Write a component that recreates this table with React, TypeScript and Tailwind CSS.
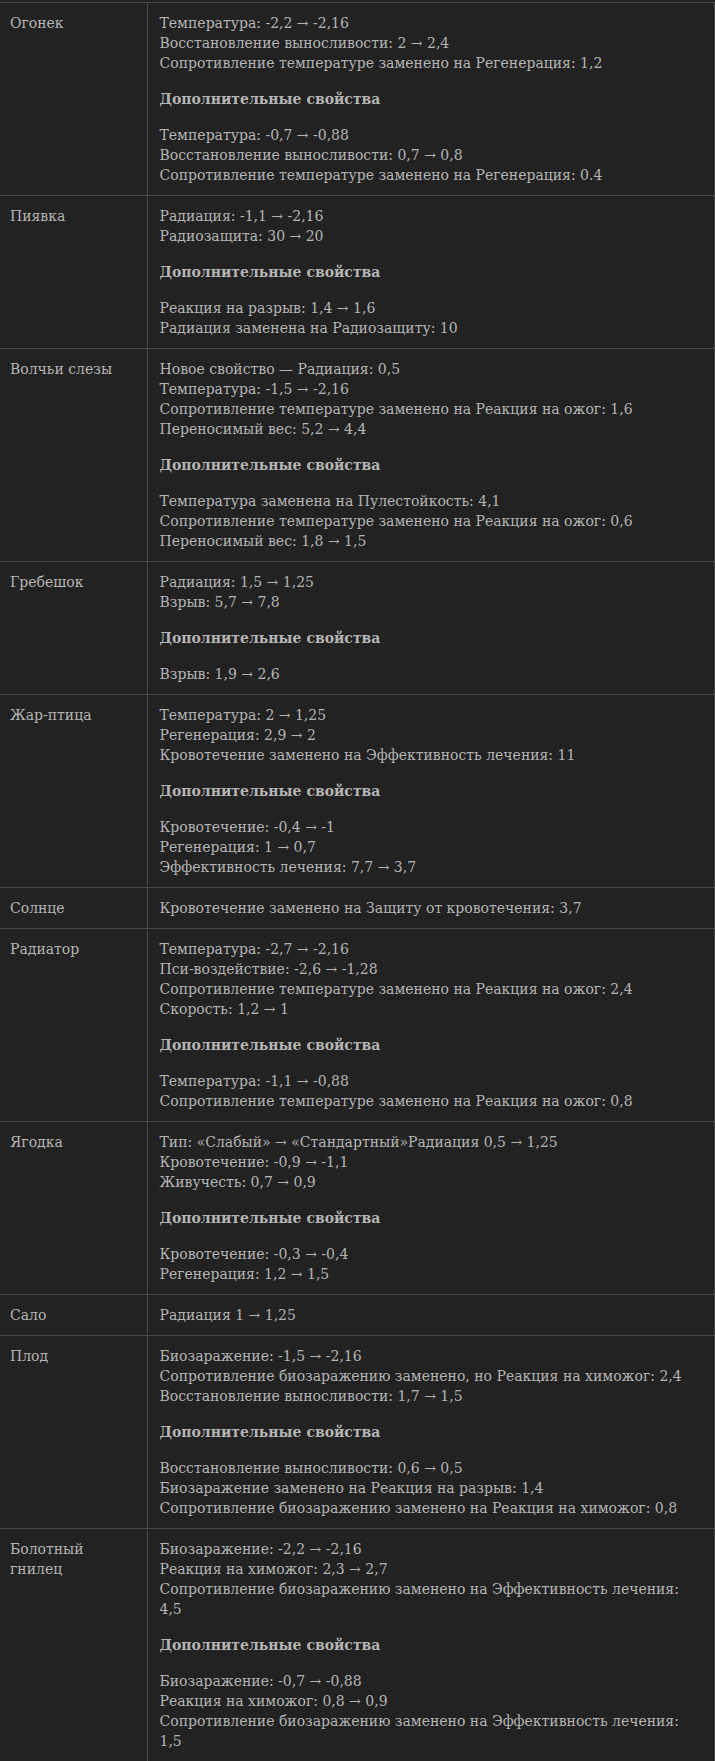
import React from "react";

type Row = {
  name: string;
  main: string[];
  extra?: string[];
};

const rows: Row[] = [
  {
    name: "Огонек",
    main: [
      "Температура: -2,2 → -2,16",
      "Восстановление выносливости: 2 → 2,4",
      "Сопротивление температуре заменено на Регенерация: 1,2",
    ],
    extra: [
      "Температура: -0,7 → -0,88",
      "Восстановление выносливости: 0,7 → 0,8",
      "Сопротивление температуре заменено на Регенерация: 0.4",
    ],
  },
  {
    name: "Пиявка",
    main: ["Радиация: -1,1 → -2,16", "Радиозащита: 30 → 20"],
    extra: ["Реакция на разрыв: 1,4 → 1,6", "Радиация заменена на Радиозащиту: 10"],
  },
  {
    name: "Волчьи слезы",
    main: [
      "Новое свойство — Радиация: 0,5",
      "Температура: -1,5 → -2,16",
      "Сопротивление температуре заменено на Реакция на ожог: 1,6",
      "Переносимый вес: 5,2 → 4,4",
    ],
    extra: [
      "Температура заменена на Пулестойкость: 4,1",
      "Сопротивление температуре заменено на Реакция на ожог: 0,6",
      "Переносимый вес: 1,8 → 1,5",
    ],
  },
  {
    name: "Гребешок",
    main: ["Радиация: 1,5 → 1,25", "Взрыв: 5,7 → 7,8"],
    extra: ["Взрыв: 1,9 → 2,6"],
  },
  {
    name: "Жар-птица",
    main: [
      "Температура: 2 → 1,25",
      "Регенерация: 2,9 → 2",
      "Кровотечение заменено на Эффективность лечения: 11",
    ],
    extra: [
      "Кровотечение: -0,4 → -1",
      "Регенерация: 1 → 0,7",
      "Эффективность лечения: 7,7 → 3,7",
    ],
  },
  {
    name: "Солнце",
    main: ["Кровотечение заменено на Защиту от кровотечения: 3,7"],
  },
  {
    name: "Радиатор",
    main: [
      "Температура: -2,7 → -2,16",
      "Пси-воздействие: -2,6 → -1,28",
      "Сопротивление температуре заменено на Реакция на ожог: 2,4",
      "Скорость: 1,2 → 1",
    ],
    extra: [
      "Температура: -1,1 → -0,88",
      "Сопротивление температуре заменено на Реакция на ожог: 0,8",
    ],
  },
  {
    name: "Ягодка",
    main: [
      "Тип: «Слабый» → «Стандартный»Радиация 0,5 → 1,25",
      "Кровотечение: -0,9 → -1,1",
      "Живучесть: 0,7 → 0,9",
    ],
    extra: ["Кровотечение: -0,3 → -0,4", "Регенерация: 1,2 → 1,5"],
  },
  {
    name: "Сало",
    main: ["Радиация 1 → 1,25"],
  },
  {
    name: "Плод",
    main: [
      "Биозаражение: -1,5 → -2,16",
      "Сопротивление биозаражению заменено, но Реакция на химожог: 2,4",
      "Восстановление выносливости: 1,7 → 1,5",
    ],
    extra: [
      "Восстановление выносливости: 0,6 → 0,5",
      "Биозаражение заменено на Реакция на разрыв: 1,4",
      "Сопротивление биозаражению заменено на Реакция на химожог: 0,8",
    ],
  },
  {
    name: "Болотный гнилец",
    main: [
      "Биозаражение: -2,2 → -2,16",
      "Реакция на химожог: 2,3 → 2,7",
      "Сопротивление биозаражению заменено на Эффективность лечения: 4,5",
    ],
    extra: [
      "Биозаражение: -0,7 → -0,88",
      "Реакция на химожог: 0,8 → 0,9",
      "Сопротивление биозаражению заменено на Эффективность лечения: 1,5",
    ],
  },
];

// one block of lines, separated by <br> like the wiki markup
const Lines = ({ items }: { items: string[] }) => (
  <p>
    {items.map((t, i) => (
      <React.Fragment key={i}>
        {i > 0 && <br />}
        {t}
      </React.Fragment>
    ))}
  </p>
);

export default function App() {
  return (
    <div className="min-h-screen w-[715px] bg-[#222222] pt-[2px] font-['DejaVu_Serif',serif] text-[14px] leading-[20px] text-[#b5b5b5]">
      <table className="w-full table-fixed border-collapse">
        <colgroup>
          <col className="w-[147px]" />
          <col />
        </colgroup>
        <tbody>
          {rows.map((row) => (
            <tr key={row.name} className="border-t border-[#4a4a4a]">
              <td className="border-r border-[#4a4a4a] px-[10px] pt-[10px] pb-[10px] align-top">
                {row.name}
              </td>
              <td className="border-r border-[#4a4a4a] pl-3 pr-3 pt-[10px] pb-[10px] align-top">
                <Lines items={row.main} />
                {row.extra && (
                  <>
                    <p className="mt-4 font-bold">Дополнительные свойства</p>
                    <div className="mt-4">
                      <Lines items={row.extra} />
                    </div>
                  </>
                )}
              </td>
            </tr>
          ))}
        </tbody>
      </table>
    </div>
  );
}
